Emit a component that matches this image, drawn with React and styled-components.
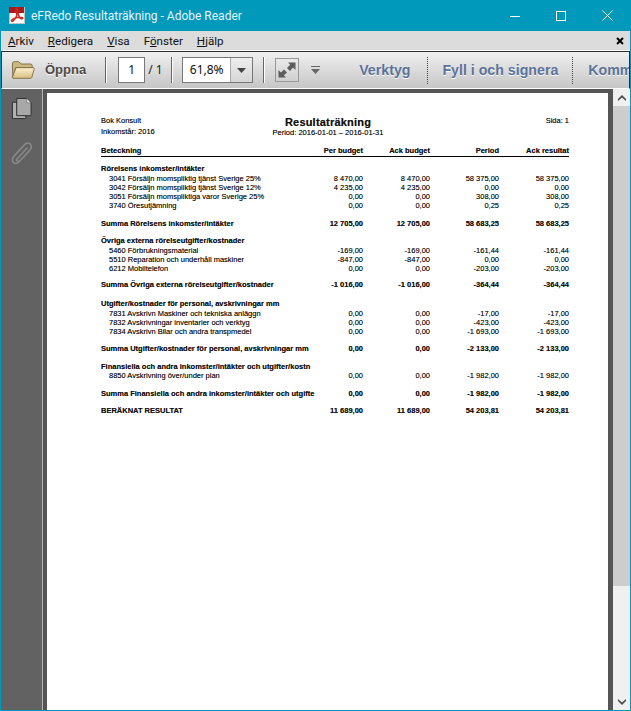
import React from 'react';
import styled, { createGlobalStyle } from 'styled-components';

const Global = createGlobalStyle`
  html, body { margin: 0; padding: 0; background: #fff; }
  #root { width: 631px; height: 711px; overflow: hidden; }
`;

const Win = styled.div`
  width: 631px; height: 711px; box-sizing: border-box;
  border: 1px solid #0099bc; border-top: none;
  display: flex; flex-direction: column; background: #dcdcdc; overflow: hidden;
`;
const TitleBar = styled.div`
  height: 31px; flex: none; background: #0099bc; display: flex; align-items: center;
  font: 12px/16px Roboto, "Noto Sans", sans-serif; padding-left: 8px;
`;
const TitleText = styled.span` margin-left: 6px; white-space: nowrap; color: #e4f3f7;`;
const Caption = styled.div` margin-left: auto; display: flex; align-items: center; height: 100%;`;
const CapBtn = styled.div` width: 46px; height: 100%; display: flex; align-items: center; justify-content: center;`;

const MenuBar = styled.div`
  height: 20px; flex: none; background: #dcdcdc; display: flex; align-items: center; padding-left: 7px; padding-right: 6px;
  font: 11.6px/16px Roboto, "Noto Sans", sans-serif; color: #111; gap: 14px;
`;
const MenuItem = styled.span` u { text-decoration-thickness: 1px; text-underline-offset: 1px; }`;
const MenuClose = styled.span` margin-left: auto; display: flex; `;

const Toolbar = styled.div`
  height: 36px; flex: none;
  border: 1px solid #2e2e2e; border-bottom: 1px solid #fff; box-shadow: 0 -1px 0 #fff;
  background: linear-gradient(#f0f0f0, #c6c6c6); display: flex; align-items: center; overflow: hidden; white-space: nowrap;
`;
const FolderWrap = styled.div` margin-left: 9px; width: 24px; height: 22px; flex: none; display:flex; align-items:center;`;
const Open = styled.span`
  margin-left: 10px; flex: none; font: bold 13px/18px "Liberation Sans", sans-serif; color: #4a4a4a; text-shadow: 0 1px 0 #fff;
`;
const Sep = styled.div` width: 1px; height: 26px; background: #666; box-shadow: 1px 0 0 #fff; flex: none; margin-left: ${p => p.$l}px;`;
const PageBox = styled.div`
  margin-left: 12px; width: 27px; height: 26px; flex: none; box-sizing: border-box; border: 1px solid #777; outline: 1px solid #fff; outline-offset: -2px;
  background: #fff; text-align: center; font: 12px/24px "Noto Sans", sans-serif; color: #111;
`;
const PageOf = styled.span` margin-left: 3px; width: 13px; flex: none; font: 12px/16px "Noto Sans", sans-serif; color: #222; white-space: nowrap; `;
const Zoom = styled.div`
  margin-left: 10px; width: 71px; height: 26px; flex: none; box-sizing: border-box; border: 1px solid #777; display: flex;
  font: 12px/24px "Noto Sans", sans-serif; color: #111;
`;
const ZoomVal = styled.div` flex: 1; background: #fff; text-align: center; border-right: 1px solid #aaa; `;
const ZoomBtn = styled.div` width: 21px; background: linear-gradient(#eee, #d6d6d6); display:flex; align-items:center; justify-content:center;`;
const FullBtn = styled.div`
  margin-left: 11px; width: 24px; height: 24px; flex: none; box-sizing: border-box; border: 1px solid #999; background: linear-gradient(#eaeaea,#cfcfcf);
  display:flex; align-items:center; justify-content:center;
`;
const Tiny = styled.div` margin-left: 12px; flex: none; display:flex; `;
const ToolLink = styled.span`
  margin-left: ${p => p.$l}px; flex: none; font: bold 14.2px/18px "Liberation Sans", sans-serif; color: #5a7299; text-shadow: 0 1px 0 #fff;
`;
const Dots = styled.div` width: 0; height: 27px; flex: none; border-left: 1px dotted #444; margin-left: ${p => p.$l}px;`;

const Body = styled.div` flex: 1; min-height: 0; display: flex; `;
const Side = styled.div`
  width: 41px; flex: none; background: #626262; border-right: 1px solid #b5b5b5; box-shadow: 1px 0 0 #222; display:flex; flex-direction:column; align-items:center; padding-top: 8px; gap: 21px;
`;
const Stage = styled.div` flex: 1; background: #555; padding: 4px 5px 0 4px; min-width: 0; display:flex;`;
const Paper = styled.div`
  flex: 1; background: #fff; padding: 18px 0 0 54px; box-sizing: border-box; color: #111;
  font: 7.5px/9.3px "Liberation Sans", Arial, sans-serif; overflow: hidden; text-shadow: 0 0 .4px rgba(0,0,0,.55);
`;
const Scroll = styled.div` width: 17px; flex: none; background: #f0f0f0; display:flex; flex-direction:column; align-items: center;`;
const Arrow = styled.div` height: 17px; flex:none; display:flex; align-items:center; justify-content:center; `;
const Thumb = styled.div` width: 100%; height: 480px; background: #cdcdcd; flex: none; `;
const Spacer = styled.div` flex: 1; `;

const Head = styled.div` display: grid; grid-template-columns: 170px 114px 1fr; width: 468px; `;
const HeadLeft = styled.div` padding-top: 4px; line-height: 11px; `;
const HeadMid = styled.div` padding-top: 5px; text-align: center; white-space: nowrap; `;
const DocTitle = styled.div` font: bold 11px/12px "Liberation Sans", sans-serif; letter-spacing: 0.2px; color: #111; `;
const HeadRight = styled.div` text-align: right; padding-top: 4px; line-height: 11px; `;
const Table = styled.div` width: 468px; margin-top: 9px; `;
const Row = styled.div`
  display: grid; grid-template-columns: 216px 46px 67px 69px 70px; height: 9.3px; margin-top: ${p => p.$t || 0}px;
  font-weight: ${p => p.$b ? 'bold' : 'normal'}; white-space: nowrap;
`;
const Label = styled.div` overflow: hidden; padding-left: ${p => p.$i ? 8 : 0}px; `;
const Num = styled.div` text-align: right; `;
const HeadRow = styled(Row)` border-bottom: 1px solid #000; height: 10px; font-weight: bold; `;

const Pdf = () => (
  <svg width="16" height="17" viewBox="0 0 16 17">
    <rect x="0.5" y="0.5" width="15" height="16" fill="#fff" stroke="#bfc6c8" />
    <rect x="0" y="0" width="15" height="6" fill="#a81c1c" />
    <path d="M8 1 C6.5 1 7 5 8 8 C6.5 12 3.5 15.5 2.5 14 C1.5 12 9 9.5 13 10.5 C15 11 13 12.5 11 11 C9 9 9 2 8 1Z" fill="none" stroke="#c8261e" strokeWidth="1.5" />
  </svg>
);
const Folder = () => (
  <svg width="24" height="20" viewBox="0 0 26 21">
    <defs>
      <linearGradient id="fg" x1="0" y1="0" x2="0" y2="1"><stop offset="0" stopColor="#fdf3cf" /><stop offset="1" stopColor="#d7bd83" /></linearGradient>
    </defs>
    <path d="M1.5 4 Q1.5 1.5 3.5 1.5 H8.5 L11 4 H21 Q23 4 23 6 V8 H5 L2 19 Z" fill="#cdb67f" stroke="#7d6c43" />
    <path d="M5.5 8 H24.5 Q25.5 8 25 10 L22.5 18.5 Q22 19.5 21 19.5 H2.5 Q1.2 19.5 1.6 18 Z" fill="url(#fg)" stroke="#7d6c43" />
  </svg>
);
const Chevron = ({ up }) => (
  <svg width="8" height="6" viewBox="0 0 8 6" style={{ transform: up ? 'none' : 'rotate(180deg)' }}>
    <path d="M4 0 L8 4 V6 L4 2.5 L0 6 V4Z" fill="#4a4a4a" />
  </svg>
);
const Pages = () => (
  <svg width="22" height="23" viewBox="0 0 22 24">
    <path d="M1 5.5 H6 V19 H15 V22 Q15 22.5 14 22.5 H1 Z" fill="#b0b0b0" stroke="#2c2c2c" />
    <path d="M5.5 1.5 H16 L20.5 6 V18.5 Q20.5 19.5 19.5 19.5 H5.5 Z" fill="#a8a8a8" stroke="#2c2c2c" />
    <path d="M16 1.5 V6 H20.5Z" fill="#eee" stroke="#555" strokeWidth="0.6" />
  </svg>
);
const Clip = () => (
  <svg width="22" height="24" viewBox="0 0 23 25" fill="none">
    <path d="M17 7 L7 18 Q5 20 6.5 21 Q8 22 10 20 L20 9 Q22.5 6 20 3 Q17.5 1 15 3 L3 16 Q0 20 2.5 22.5 Q5 24.5 8.5 22" stroke="#8a8a8a" strokeWidth="1.6" />
  </svg>
);
const Expand = () => (
  <svg width="20" height="20" viewBox="0 0 20 20">
    <path d="M11 2.5H18.5V10L16 7.5L13 11L10 8L13.2 4.7Z" fill="#5c5c5c" />
    <path d="M9 17.5H1.5V10L4 12.5L7 9.5L10 12.5L6.8 15.3Z" fill="#5c5c5c" />
  </svg>
);

const rows = [
  { k: 'g', l: 'Rörelsens inkomster/intäkter', t: 7 },
  { l: '3041 Försäljn momspliktig tjänst Sverige 25%', v: ['8 470,00', '8 470,00', '58 375,00', '58 375,00'] },
  { l: '3042 Försäljn momspliktig tjänst Sverige 12%', v: ['4 235,00', '4 235,00', '0,00', '0,00'] },
  { l: '3051 Försäljn momspliktiga varor Sverige 25%', v: ['0,00', '0,00', '308,00', '308,00'] },
  { l: '3740 Öresutjämning', v: ['0,00', '0,00', '0,25', '0,25'] },
  { k: 's', l: 'Summa Rörelsens inkomster/intäkter', v: ['12 705,00', '12 705,00', '58 683,25', '58 683,25'], t: 8.5 },
  { k: 'g', l: 'Övriga externa rörelseutgifter/kostnader', t: 7.7 },
  { l: '5460 Förbrukningsmaterial', v: ['-169,00', '-169,00', '-161,44', '-161,44'] },
  { l: '5510 Reparation och underhåll maskiner', v: ['-847,00', '-847,00', '0,00', '0,00'] },
  { l: '6212 Mobiltelefon', v: ['0,00', '0,00', '-203,00', '-203,00'] },
  { k: 's', l: 'Summa Övriga externa rörelseutgifter/kostnader', v: ['-1 016,00', '-1 016,00', '-364,44', '-364,44'], t: 7 },
  { k: 'g', l: 'Utgifter/kostnader för personal, avskrivningar mm', t: 9.5 },
  { l: '7831 Avskrivn Maskiner och tekniska anläggn', v: ['0,00', '0,00', '-17,00', '-17,00'] },
  { l: '7832 Avskrivningar inventarier och verktyg', v: ['0,00', '0,00', '-423,00', '-423,00'] },
  { l: '7834 Avskrivn Bilar och andra transpmedel', v: ['0,00', '0,00', '-1 693,00', '-1 693,00'] },
  { k: 's', l: 'Summa Utgifter/kostnader för personal, avskrivningar mm', v: ['0,00', '0,00', '-2 133,00', '-2 133,00'], t: 7.8 },
  { k: 'g', l: 'Finansiella och andra inkomster/intäkter och utgifter/kostn', t: 8.5 },
  { l: '8850 Avskrivning över/under plan', v: ['0,00', '0,00', '-1 982,00', '-1 982,00'] },
  { k: 's', l: 'Summa Finansiella och andra inkomster/intäkter och utgifte', v: ['0,00', '0,00', '-1 982,00', '-1 982,00'], t: 8.5 },
  { k: 's', l: 'BERÄKNAT RESULTAT', v: ['11 689,00', '11 689,00', '54 203,81', '54 203,81'], t: 8 },
];

export default function App() {
  return (
    <Win>
      <Global />
      <TitleBar>
        <Pdf />
        <TitleText>eFRedo Resultaträkning - Adobe Reader</TitleText>
        <Caption>
          <CapBtn><svg width="10" height="10"><path d="M0 5.5H10" stroke="#fff" /></svg></CapBtn>
          <CapBtn><svg width="10" height="10"><rect x=".5" y=".5" width="9" height="9" fill="none" stroke="#fff" /></svg></CapBtn>
          <CapBtn><svg width="11" height="11"><path d="M.5 .5L10.5 10.5M10.5 .5L.5 10.5" stroke="#fff" /></svg></CapBtn>
        </Caption>
      </TitleBar>
      <MenuBar>
        <MenuItem><u>A</u>rkiv</MenuItem>
        <MenuItem><u>R</u>edigera</MenuItem>
        <MenuItem><u>V</u>isa</MenuItem>
        <MenuItem>F<u>ö</u>nster</MenuItem>
        <MenuItem><u>H</u>jälp</MenuItem>
        <MenuClose><svg width="8" height="8"><path d="M1 1L7 7M7 1L1 7" stroke="#000" strokeWidth="2" /></svg></MenuClose>
      </MenuBar>
      <Toolbar>
        <FolderWrap><Folder /></FolderWrap>
        <Open>Öppna</Open>
        <Sep $l={19} />
        <PageBox>1</PageBox>
        <PageOf>/ 1</PageOf>
        <Sep $l={10} />
        <Zoom><ZoomVal>61,8%</ZoomVal><ZoomBtn><svg width="9" height="5"><path d="M0 0H9L4.5 5Z" fill="#444" /></svg></ZoomBtn></Zoom>
        <Sep $l={10} />
        <FullBtn><Expand /></FullBtn>
        <Tiny><svg width="9" height="8"><path d="M0 0H9V1H0ZM0 3H9L4.5 8Z" fill="#666" /></svg></Tiny>
        <ToolLink $l={39}>Verktyg</ToolLink>
        <Dots $l={17} />
        <ToolLink $l={14}>Fyll i och signera</ToolLink>
        <Dots $l={14} />
        <ToolLink $l={15}>Kommentar</ToolLink>
      </Toolbar>
      <Body>
        <Side><Pages /><Clip /></Side>
        <Stage>
          <Paper>
            <Head>
              <HeadLeft>Bok Konsult<br />Inkomstår: 2016</HeadLeft>
              <HeadMid><DocTitle>Resultaträkning</DocTitle>Period: 2016-01-01 – 2016-01-31</HeadMid>
              <HeadRight>Sida: 1</HeadRight>
            </Head>
            <Table>
              <HeadRow><Label>Beteckning</Label><Num>Per budget</Num><Num>Ack budget</Num><Num>Period</Num><Num>Ack resultat</Num></HeadRow>
              {rows.map((r, i) => (
                <Row key={i} $b={r.k === 's' || r.k === 'g'} $t={r.t}>
                  <Label $i={!r.k}>{r.l}</Label>
                  {r.v && r.v.map((n, j) => <Num key={j}>{n}</Num>)}
                </Row>
              ))}
            </Table>
          </Paper>
        </Stage>
        <Scroll>
          <Arrow><Chevron up /></Arrow>
          <Thumb />
          <Spacer />
          <Arrow><Chevron /></Arrow>
        </Scroll>
      </Body>
    </Win>
  );
}
